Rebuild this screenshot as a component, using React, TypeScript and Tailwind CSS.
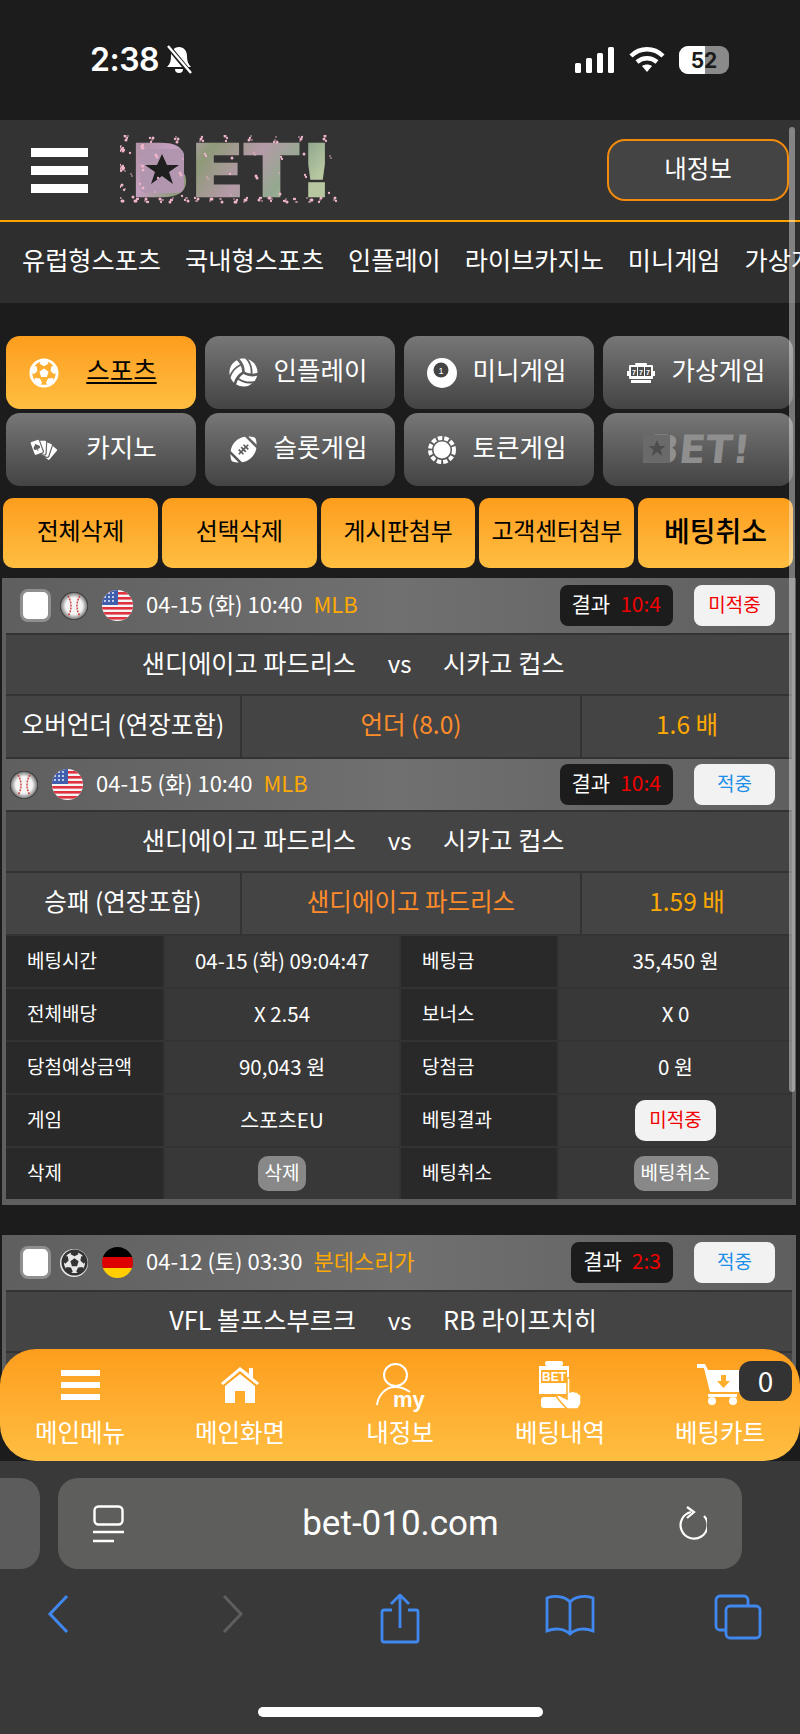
import React, {FC, ReactNode} from 'react';
import {FaFutbol, FaVolleyballBall, FaFootballBall} from 'react-icons/fa';
import {GiPokerHand} from 'react-icons/gi';

const navItems = ['유럽형스포츠', '국내형스포츠', '인플레이', '라이브카지노', '미니게임', '가상게임'];
const actions = ['전체삭제', '선택삭제', '게시판첨부', '고객센터첨부'];

const StatusBar: FC = () => (
  <div className="h-[120px] bg-[#1c1c1c] flex items-center justify-between pl-[90px] pr-[71px]">
    <div className="flex items-center gap-[6px] text-white font-['Inter',sans-serif] text-[32px] font-semibold leading-none tracking-[-0.5px]">
      2:38
      <svg width="28" height="30" viewBox="0 0 28 30" fill="white">
        <path d="M14 2c-5 0-8 4-8 9 0 5-1 8-4 11h24c-3-3-4-6-4-11 0-5-3-9-8-9z" />
        <path d="M10 24a4 4 0 0 0 8 0z" />
        <path d="M2 0 L26 29" stroke="#1c1c1c" strokeWidth="5" />
        <path d="M3 1 L26 28" stroke="white" strokeWidth="2.4" />
      </svg>
    </div>
    <div className="flex items-center gap-[14px]">
      <svg width="40" height="26" viewBox="0 0 40 26" fill="white">
        <rect x="0" y="16" width="6" height="10" rx="1.5" />
        <rect x="11" y="11" width="6" height="15" rx="1.5" />
        <rect x="22" y="6" width="6" height="20" rx="1.5" />
        <rect x="33" y="0" width="6" height="26" rx="1.5" />
      </svg>
      <svg width="36" height="26" viewBox="0 0 36 26" fill="none" stroke="white" strokeWidth="4.4">
        <path d="M2 9c9-9 23-9 32 0" />
        <path d="M8 15c6-5 14-5 20 0" />
        <path d="M18 25l-5-6c3-2 7-2 10 0z" fill="white" stroke="none" />
      </svg>
      <div className="relative w-[50px] h-[28px] rounded-[9px] overflow-hidden bg-[#8a8a8a]">
        <div className="w-[26px] h-full bg-white" />
        <span className="absolute inset-0 flex items-center justify-center text-[21px] font-bold text-[#1c1c1c] font-['Inter',sans-serif] leading-none">52</span>
      </div>
    </div>
  </div>
);

// scattered petals around the logo letters
const dots = Array.from({length: 170}, (_, i) => {
  const a = (i * 7919) % 223;
  const b = (i * 104729) % 97;
  const band = i % 5;
  return {
    x: band === 3 ? a % 24 : a,
    y: band < 2 ? 63 + b % 5 : band === 2 ? 1 + b % 7 : 6 + b % 58,
    r: 0.8 + (b % 3) * 0.35,
  };
});

const Logo: FC = () => (
  <svg width="226" height="70" viewBox="0 0 226 70" className="shrink-0">
    <defs>
      <linearGradient id="blossom" x1="0" y1="0" x2="1" y2="0.3">
        <stop offset="0" stopColor="#a78c9a" />
        <stop offset="0.25" stopColor="#c49fc0" />
        <stop offset="0.42" stopColor="#8e9a78" />
        <stop offset="0.65" stopColor="#b59aa8" />
        <stop offset="0.85" stopColor="#93a98f" />
        <stop offset="1" stopColor="#b7c7a0" />
      </linearGradient>
    </defs>
    <g transform="translate(10 61) scale(1.1 0.98)">
      <text x="0" y="0" fontFamily="'DejaVu Sans', sans-serif" fontWeight="700" fontSize="72" fill="url(#blossom)" stroke="url(#blossom)" strokeWidth="2.500">BET!</text>
    </g>
    <rect x="20" y="14" width="44" height="44" rx="6" fill="#b295ae" />
    <path d="M42 19l5 11 12 0-10 7 4 12-11-8-11 8 4-12-10-7 12 0z" fill="#1f1f1f" />
    {dots.map((d, i) => (
      <circle key={i} cx={d.x} cy={d.y} r={d.r} fill="#f0b5cb" />
    ))}
  </svg>
);

const Header: FC = () => (
  <>
    <div className="h-[100px] bg-[#333333] flex items-center pl-[31px] pr-[11px]">
      <div className="w-[57px] flex flex-col gap-[9px] shrink-0">
        <div className="h-[9px] bg-white" />
        <div className="h-[9px] bg-white" />
        <div className="h-[9px] bg-white" />
      </div>
      <div className="ml-[32px]">
        <Logo />
      </div>
      <div className="ml-auto w-[182px] h-[62px] rounded-[18px] border-2 border-[#f28a0c] bg-[#444444] flex items-center justify-center text-white text-[24.5px] pb-[3px]">
        내정보
      </div>
    </div>
    <div className="h-[83px] bg-[#2e2e2e] border-t-2 border-[#ffa200] flex items-center gap-[24px] pl-[22px] pb-[6px] overflow-hidden whitespace-nowrap text-white text-[25.2px]">
      {navItems.map(n => <span key={n}>{n}</span>)}
    </div>
  </>
);

const PoolBall: FC = () => (
  <svg width="30" height="30" viewBox="0 0 30 30">
    <circle cx="15" cy="15" r="15" fill="white" />
    <circle cx="14" cy="12" r="7.5" fill="#444" />
    <text x="14" y="15.5" textAnchor="middle" fontSize="9" fill="white" fontFamily="'Liberation Sans',sans-serif">1</text>
  </svg>
);

const SlotIcon: FC = () => (
  <svg width="28" height="20" viewBox="0 0 28 20" fill="white">
    <rect x="8" y="0" width="12" height="2" rx="1" />
    <rect x="2" y="2" width="24" height="14" rx="1" />
    <rect x="0" y="8" width="2" height="5" />
    <rect x="26" y="8" width="2" height="5" />
    <rect x="4" y="17" width="20" height="3" />
    <rect x="4" y="4" width="6" height="9" fill="#4d4d4d" />
    <rect x="11" y="4" width="6" height="9" fill="#4d4d4d" />
    <rect x="18" y="4" width="6" height="9" fill="#4d4d4d" />
    <text x="7" y="11.500" textAnchor="middle" fontSize="7" fontWeight="700" fontFamily="'Liberation Sans',sans-serif">7</text>
    <text x="14" y="11.500" textAnchor="middle" fontSize="7" fontWeight="700" fontFamily="'Liberation Sans',sans-serif">7</text>
    <text x="21" y="11.500" textAnchor="middle" fontSize="7" fontWeight="700" fontFamily="'Liberation Sans',sans-serif">7</text>
  </svg>
);

const ChipIcon: FC = () => (
  <svg width="28" height="28" viewBox="0 0 28 28">
    <circle cx="14" cy="14" r="12" fill="none" stroke="white" strokeWidth="4" strokeDasharray="4.5 2" />
    <circle cx="14" cy="14" r="8.5" fill="white" />
  </svg>
);

const GreyLogo: FC = () => (
  <svg width="112" height="40" viewBox="0 0 112 40" className="mx-auto">
    <g transform="translate(0 33) skewX(-6)">
      <text x="6" y="0" fontFamily="'DejaVu Sans', sans-serif" fontWeight="700" fontSize="39" fill="#8f8f8f">BET!</text>
    </g>
    <rect x="1" y="5" width="27" height="28" fill="#6a6a6a" />
    <path d="M15 10l2.500 6 6 0-5 4 2 6-5.500-4-5.500 4 2-6-5-4 6 0z" fill="#4d4d4d" />
  </svg>
);

const GameTab: FC<{icon?: ReactNode; label?: string; active?: boolean; children?: ReactNode}> = ({icon, label, active, children}) => (
  <div className={`h-[73px] rounded-[14px] flex items-center ${active ? 'bg-gradient-to-b from-[#fd9d1c] to-[#ffbe40] text-black' : 'bg-gradient-to-b from-[#777777] to-[#444444] text-white'}`}>
    {children ?? (
      <>
        <div className="w-[30px] ml-[23px] flex justify-center text-white shrink-0">{icon}</div>
        <div className={`flex-1 text-center pr-[12px] pb-[6px] text-[25.5px] ${active ? 'underline decoration-2 underline-offset-[2px]' : ''}`}>{label}</div>
      </>
    )}
  </div>
);

const GameTabs: FC = () => (
  <div className="grid grid-cols-4 gap-x-[9px] gap-y-[4px] pl-[6px] pr-[7px] pt-[33px]">
    <GameTab active icon={<FaFutbol size={30} />} label="스포츠" />
    <GameTab icon={<FaVolleyballBall size={29} />} label="인플레이" />
    <GameTab icon={<PoolBall />} label="미니게임" />
    <GameTab icon={<SlotIcon />} label="가상게임" />
    <GameTab icon={<GiPokerHand size={32} />} label="카지노" />
    <GameTab icon={<FaFootballBall size={27} />} label="슬롯게임" />
    <GameTab icon={<ChipIcon />} label="토큰게임" />
    <GameTab>
      <GreyLogo />
    </GameTab>
  </div>
);

const ActionButtons: FC = () => (
  <div className="grid grid-cols-5 gap-[4px] pl-[3px] pr-[7px] pt-[12px] text-black">
    {actions.map(a => (
      <div key={a} className="h-[70px] rounded-[10px] bg-gradient-to-b from-[#fd9d1c] to-[#ffbe40] flex items-center justify-center text-[24px] tracking-[-0.3px] pb-[6px] whitespace-nowrap">{a}</div>
    ))}
    <div className="h-[70px] rounded-[10px] bg-gradient-to-b from-[#fd9d1c] to-[#ffbe40] flex items-center justify-center text-[28px] font-medium pb-[6px]">베팅취소</div>
  </div>
);

const Baseball: FC = () => (
  <svg width="28" height="28" viewBox="0 0 28 28" className="shrink-0">
    <defs>
      <radialGradient id="ballShade" cx="0.5" cy="0.5" r="0.5">
        <stop offset="0.6" stopColor="#f4f4f4" />
        <stop offset="0.9" stopColor="#8a8a8a" />
        <stop offset="1" stopColor="#222222" />
      </radialGradient>
    </defs>
    <circle cx="14" cy="14" r="14" fill="url(#ballShade)" />
    <path d="M8 4c4 6 4 14 0 20M20 4c-4 6-4 14 0 20" fill="none" stroke="#c44" strokeWidth="1.500" strokeDasharray="2 1" />
  </svg>
);

const Soccer: FC = () => (
  <span className="w-[28px] h-[28px] rounded-full bg-[#e8e8e8] flex items-center justify-center text-[#333] shrink-0">
    <FaFutbol size={27} />
  </span>
);

const UsaFlag: FC = () => (
  <svg width="31" height="31" viewBox="0 0 31 31" className="shrink-0 rounded-full">
    <rect width="31" height="31" fill="#f4f4f4" />
    {[0, 5, 10, 15, 20, 25].map(y => <rect key={y} y={y + 2} width="31" height="2.6" fill="#e0313f" />)}
    <rect width="16" height="15" fill="#3f5fae" />
    {[3, 7, 11].map(x => [3, 7, 11].map(y => <circle key={`${x}-${y}`} cx={x} cy={y} r="0.9" fill="white" />))}
  </svg>
);

const GermanFlag: FC = () => (
  <div className="w-[31px] h-[31px] rounded-full overflow-hidden flex flex-col shrink-0">
    <div className="flex-1 bg-black" />
    <div className="flex-1 bg-[#dd0000]" />
    <div className="flex-1 bg-[#ffce00]" />
  </div>
);

interface GameHeadProps {
  checkbox?: boolean;
  short?: boolean;
  ball: ReactNode;
  flag: ReactNode;
  date: string;
  league: string;
  score: string;
  hit: boolean;
}

const ResultBadge: FC<{hit: boolean}> = ({hit}) => (
  <div className={`w-[81px] h-[41px] rounded-[8px] bg-[#f2f2f2] flex items-center justify-center text-[19px] pb-[2px] ${hit ? 'text-[#1a8ee8]' : 'text-[#f00000]'}`}>
    {hit ? '적중' : '미적중'}
  </div>
);

const GameHead: FC<GameHeadProps> = ({checkbox, short, ball, flag, date, league, score, hit}) => (
  <div className={`${short ? 'h-[51px]' : 'h-[55px]'} bg-gradient-to-r from-[#5f5f5f] via-[#707070] to-[#5f5f5f] flex items-center pr-[17px] ${checkbox ? 'pl-[14px]' : 'pl-[4px]'} text-[22px] whitespace-nowrap`}>
    {checkbox && <div className="w-[31px] h-[33px] rounded-[8px] bg-white border-[3px] border-[#8f8f8f] mr-[9px] shrink-0" />}
    {ball}
    <div className="ml-[14px] mr-[13px]">{flag}</div>
    <span className="text-white pb-[4px]">{date}</span>
    <span className="text-[#ffa900] ml-[11px] pb-[4px]">{league}</span>
    <div className="ml-auto h-[41px] px-[12px] pb-[3px] rounded-[8px] bg-[#1c1c1c] flex items-center gap-[10px] text-[21px]">
      <span className="text-white">결과</span>
      <span className="text-[#f00000]">{score}</span>
    </div>
    <div className="ml-[21px]">
      <ResultBadge hit={hit} />
    </div>
  </div>
);

const TeamRow: FC<{home: string; away: string}> = ({home, away}) => (
  <div className="h-[59px] bg-[#444444] flex items-center text-white text-[25.2px] pb-[3px] whitespace-nowrap">
    <div className="w-[350px] text-right">{home}</div>
    <div className="w-[87px] text-center text-[24px]">vs</div>
    <div>{away}</div>
  </div>
);

const MarketRow: FC<{name: string; pick: string; odds: string}> = ({name, pick, odds}) => (
  <div className="grid grid-cols-[234px_338px_1fr] gap-[2px] h-[61px] text-[24.5px] whitespace-nowrap">
    <div className="bg-[#444444] text-white flex items-center justify-center pb-[4px]">{name}</div>
    <div className="bg-[#444444] text-[#ff8c2a] flex items-center justify-center pb-[4px]">{pick}</div>
    <div className="bg-[#444444] text-[#ffa900] flex items-center justify-center pb-[4px]">{odds}</div>
  </div>
);

const DetailCell: FC<{label: string; wide?: boolean; children: ReactNode}> = ({label, wide, children}) => (
  <>
    <div className="h-[51px] bg-[#292929] text-white text-[19px] flex items-center pl-[21px] pb-[3px]">{label}</div>
    <div className={`h-[51px] bg-[#383838] text-white flex items-center justify-center ${wide ? 'text-[20.5px] pb-[3px]' : 'text-[19px]'}`}>{children}</div>
  </>
);

const DetailTable: FC = () => (
  <div className="grid grid-cols-[157px_234px_156px_1fr] gap-[2px] whitespace-nowrap">
    <DetailCell wide label="베팅시간">04-15 (화) 09:04:47</DetailCell>
    <DetailCell wide label="베팅금">35,450 원</DetailCell>
    <DetailCell wide label="전체배당">X 2.54</DetailCell>
    <DetailCell wide label="보너스">X 0</DetailCell>
    <DetailCell wide label="당첨예상금액">90,043 원</DetailCell>
    <DetailCell wide label="당첨금">0 원</DetailCell>
    <DetailCell wide label="게임">스포츠EU</DetailCell>
    <DetailCell label="베팅결과">
      <div className="w-[81px] h-[41px] rounded-[10px] bg-[#f2f2f2] text-[#f00000] flex items-center justify-center pb-[2px]">미적중</div>
    </DetailCell>
    <DetailCell label="삭제">
      <div className="w-[48px] h-[35px] rounded-[10px] bg-[#888888] flex items-center justify-center pb-[2px]">삭제</div>
    </DetailCell>
    <DetailCell label="베팅취소">
      <div className="w-[84px] h-[35px] rounded-[10px] bg-[#888888] flex items-center justify-center pb-[2px]">베팅취소</div>
    </DetailCell>
  </div>
);

const BetList: FC = () => (
  <div className="ml-[2px] mr-[4px]">
    <div className="mt-[10px] bg-[#5f5f5f] px-[4px] pb-[6px]">
      <div className="flex flex-col gap-[2px] bg-[#333333]">
        <GameHead checkbox ball={<Baseball />} flag={<UsaFlag />} date="04-15 (화) 10:40" league="MLB" score="10:4" hit={false} />
        <TeamRow home="샌디에이고 파드리스" away="시카고 컵스" />
        <MarketRow name="오버언더 (연장포함)" pick="언더 (8.0)" odds="1.6 배" />
        <GameHead short ball={<Baseball />} flag={<UsaFlag />} date="04-15 (화) 10:40" league="MLB" score="10:4" hit />
        <TeamRow home="샌디에이고 파드리스" away="시카고 컵스" />
        <MarketRow name="승패 (연장포함)" pick="샌디에이고 파드리스" odds="1.59 배" />
        <DetailTable />
      </div>
    </div>
    <div className="mt-[30px] bg-[#5f5f5f] px-[4px] pb-[6px]">
      <div className="flex flex-col gap-[2px] bg-[#333333]">
        <GameHead checkbox ball={<Soccer />} flag={<GermanFlag />} date="04-12 (토) 03:30" league="분데스리가" score="2:3" hit />
        <TeamRow home="VFL 볼프스부르크" away="RB 라이프치히" />
        <MarketRow name="승패 (연장포함)" pick="RB 라이프치히" odds="1.80 배" />
      </div>
    </div>
  </div>
);

const BottomItem: FC<{label: string; children: ReactNode}> = ({label, children}) => (
  <div className="flex flex-col items-center">
    <div className="h-[72px] flex items-center justify-center">{children}</div>
    <div className="text-[24.5px] leading-none mt-[-1px]">{label}</div>
  </div>
);

const BottomMenu: FC = () => (
  <div className="absolute left-0 right-0 bottom-0 h-[112px] rounded-[36px] bg-gradient-to-b from-[#fd9d1c] to-[#ffbe40] grid grid-cols-5 text-white">
    <BottomItem label="메인메뉴">
      <div className="w-[39px] flex flex-col gap-[6px]">
        <div className="h-[6px] bg-white" />
        <div className="h-[6px] bg-white" />
        <div className="h-[6px] bg-white" />
      </div>
    </BottomItem>
    <BottomItem label="메인화면">
      <svg width="38" height="36" viewBox="0 0 38 36" fill="white">
        <path d="M19 0L0 16l2 2L19 4l17 14 2-2-6-5V1h-4v6z" />
        <path d="M19 7L4 19v17h10V24h10v12h10V19z" />
      </svg>
    </BottomItem>
    <BottomItem label="내정보">
      <div className="relative w-[48px] h-[48px] mt-[3px]">
        <svg width="48" height="48" viewBox="0 0 48 48" fill="none" stroke="white" strokeWidth="2">
          <ellipse cx="19.500" cy="12" rx="11.500" ry="11" />
          <path d="M1 42c1-9 8-18 18-18 6 0 11 2 15 5" />
        </svg>
        <span className="absolute left-[17px] top-[26px] text-[22px] font-bold leading-none font-['Liberation_Sans',sans-serif]">my</span>
      </div>
    </BottomItem>
    <BottomItem label="베팅내역">
      <svg width="46" height="48" viewBox="0 0 46 48">
        <path d="M2 5h30v28H2z" fill="white" />
        <rect x="8" y="0" width="18" height="5" rx="2" fill="white" />
        <rect x="4" y="36" width="26" height="11" rx="3" fill="white" />
        <rect x="4" y="9" width="26" height="13" fill="#ffac2a" />
        <text x="5" y="20" fontSize="12" fontWeight="700" fill="white" fontFamily="'Liberation Sans',sans-serif">BET</text>
        <path d="M30 17h3v14l3-1 2 1 2 0 2 2 2 1v9l-3 5H30l-8-9-3-4 3-1 8 4z" fill="white" stroke="#ffae2c" strokeWidth="1.5" />
      </svg>
    </BottomItem>
    <BottomItem label="베팅카트">
      <svg width="46" height="42" viewBox="0 0 46 42" fill="white">
        <path d="M0 0h8l3 6h35v22H13L7 4H0z" />
        <circle cx="15" cy="37" r="4" />
        <circle cx="36" cy="37" r="4" />
        <rect x="11" y="30" width="29" height="3" />
        <path d="M24 11h5v6h4l-6.500 7L20 17h4z" fill="#ffae2c" />
      </svg>
    </BottomItem>
    <div className="absolute left-[739px] top-[12px] w-[53px] h-[40px] rounded-[12px] bg-[#333333] flex items-center justify-center text-white text-[28px] pb-[3px] leading-none">0</div>
  </div>
);

const Browser: FC = () => (
  <div className="h-[273px] bg-[#393939] pt-[17px]">
    <div className="flex gap-[18px] h-[91px]">
      <div className="w-[40px] rounded-r-[20px] bg-[#5c5c5c]" />
      <div className="w-[684px] rounded-[20px] bg-[#5e5e5c] flex items-center px-[35px] justify-between text-white">
        <svg width="31" height="38" viewBox="0 0 31 38" fill="none" stroke="white" strokeWidth="2.4">
          <rect x="1.500" y="1.500" width="28" height="18" rx="4" />
          <path d="M0 27h31M0 36h21" />
        </svg>
        <span className="font-['Roboto',sans-serif] text-[35px] leading-none">bet-010.com</span>
        <svg width="30" height="36" viewBox="0 0 30 36" fill="none" stroke="white" strokeWidth="2.200">
          <path d="M14 6a13.500 13.500 0 1 0 13 4" />
          <path d="M10 1l7 5-7 6" />
        </svg>
      </div>
    </div>
    <div className="flex pl-[33px] mt-[25px]">
      <div className="w-[50px] flex justify-center">
        <svg width="22" height="40" viewBox="0 0 22 40" fill="none" stroke="#4088f0" strokeWidth="3"><path d="M20 2L3 20l17 18" /></svg>
      </div>
      <div className="w-[50px] ml-[125px] flex justify-center">
        <svg width="22" height="40" viewBox="0 0 22 40" fill="none" stroke="#5e5e5e" strokeWidth="3"><path d="M2 2l17 18L2 38" /></svg>
      </div>
      <div className="w-[50px] ml-[117px] flex justify-center">
        <svg width="40" height="50" viewBox="0 0 40 50" fill="none" stroke="#4088f0" strokeWidth="2.800">
          <path d="M12 16H4a2 2 0 0 0-2 2v28a2 2 0 0 0 2 2h32a2 2 0 0 0 2-2V18a2 2 0 0 0-2-2h-8" />
          <path d="M20 34V2M11 10l9-9 9 9" />
        </svg>
      </div>
      <div className="w-[50px] ml-[120px] flex justify-center">
        <svg width="50" height="42" viewBox="0 0 50 42" fill="none" stroke="#4088f0" strokeWidth="2.800">
          <path d="M25 8C20 2 8 1 2 4v33c7-3 17-3 23 3 6-6 16-6 23-3V4c-6-3-18-2-23 4zV38" />
        </svg>
      </div>
      <div className="w-[50px] ml-[118px] flex justify-center">
        <svg width="48" height="46" viewBox="0 0 48 46" fill="none" stroke="#4088f0" strokeWidth="2.800">
          <path d="M34 11V6a4 4 0 0 0-4-4H6a4 4 0 0 0-4 4v26a4 4 0 0 0 4 4h6" />
          <rect x="12" y="12" width="34" height="32" rx="4" />
        </svg>
      </div>
    </div>
    <div className="w-[285px] h-[10px] rounded-full bg-white mx-auto mt-[63px]" />
  </div>
);

const App: FC = () => (
  <div className="w-[800px] h-[1734px] overflow-hidden bg-[#1c1c1c] font-['Noto_Sans_CJK_KR',sans-serif]">
    <StatusBar />
    <div className="relative h-[1341px] overflow-hidden">
      <Header />
      <GameTabs />
      <ActionButtons />
      <BetList />
      <div className="absolute right-[5px] top-[7px] w-[6px] h-[965px] rounded-full bg-white/40" />
      <BottomMenu />
    </div>
    <Browser />
  </div>
);

export default App;
